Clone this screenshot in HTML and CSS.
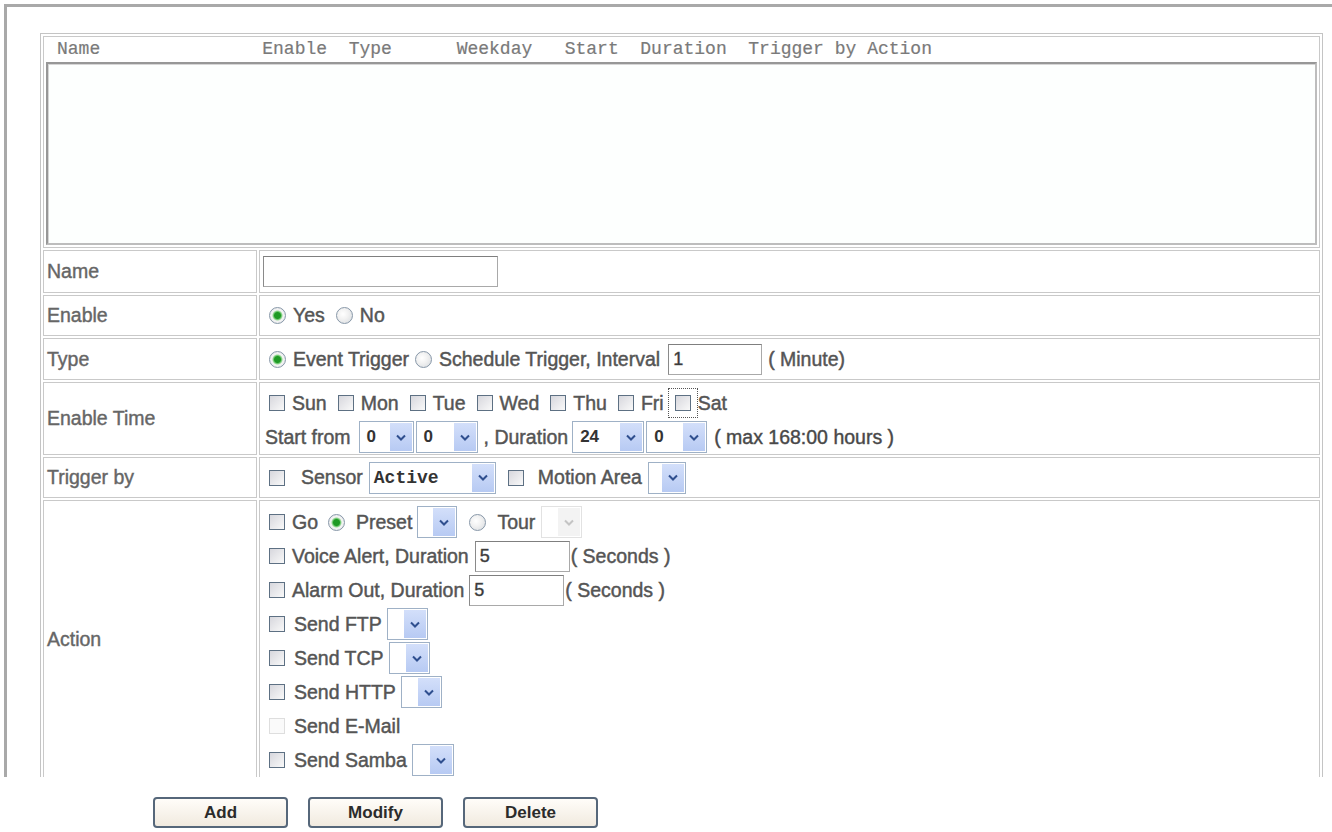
FILE: index.html
```html
<!DOCTYPE html>
<html lang="en">
<head>
    <meta charset="UTF-8">
    <title>Schedule</title>
    <link rel="stylesheet" href="styles.css">
</head>
<body>
    <div class="frame">
        <table class="sched">
            <tr>
                <td colspan="2" class="listcell">
                    <div class="listhead">Name               Enable  Type      Weekday   Start  Duration  Trigger by Action</div>
                    <div class="listbox"></div>
                </td>
            </tr>
            <tr>
                <td class="lbl">Name</td>
                <td class="val"><div class="ln h41"><input type="text" class="txt w-name"></div></td>
            </tr>
            <tr>
                <td class="lbl">Enable</td>
                <td class="val">
                    <div class="ln h39">
                        <input type="radio" class="rb" name="en" checked><span>Yes</span>
                        <input type="radio" class="rb ml11" name="en"><span>No</span>
                    </div>
                </td>
            </tr>
            <tr>
                <td class="lbl">Type</td>
                <td class="val">
                    <div class="ln h40">
                        <input type="radio" class="rb" name="tp" checked><span>Event Trigger</span>
                        <input type="radio" class="rb" name="tp"><span>Schedule Trigger, Interval</span>
                        <input type="text" class="txt w-int" value="1">
                        <span class="ml6">( Minute)</span>
                    </div>
                </td>
            </tr>
            <tr>
                <td class="lbl">Enable Time</td>
                <td class="val pt3">
                    <div class="ln">
                        <input type="checkbox" class="cb"><span>Sun</span>
                        <input type="checkbox" class="cb ml11"><span>Mon</span>
                        <input type="checkbox" class="cb ml11"><span>Tue</span>
                        <input type="checkbox" class="cb ml11"><span>Wed</span>
                        <input type="checkbox" class="cb ml11"><span>Thu</span>
                        <input type="checkbox" class="cb ml11"><span>Fri</span>
                        <input type="checkbox" class="cb ml11 focus"><span>Sat</span>
                    </div>
                    <div class="ln">
                        <span class="ml2">Start from</span>
                        <span class="sel ml8 w55"><span class="v">0</span><span class="arr"><svg width="10" height="7" viewBox="0 0 10 7"><path d="M1 1.5 5 5.5 9 1.5" fill="none" stroke="#2f4f8f" stroke-width="2"/></svg></span></span>
                        <span class="sel ml2 w62"><span class="v">0</span><span class="arr"><svg width="10" height="7" viewBox="0 0 10 7"><path d="M1 1.5 5 5.5 9 1.5" fill="none" stroke="#2f4f8f" stroke-width="2"/></svg></span></span>
                        <span class="ml6">, Duration</span>
                        <span class="sel ml4 w72"><span class="v">24</span><span class="arr"><svg width="10" height="7" viewBox="0 0 10 7"><path d="M1 1.5 5 5.5 9 1.5" fill="none" stroke="#2f4f8f" stroke-width="2"/></svg></span></span>
                        <span class="sel ml2 w61"><span class="v">0</span><span class="arr"><svg width="10" height="7" viewBox="0 0 10 7"><path d="M1 1.5 5 5.5 9 1.5" fill="none" stroke="#2f4f8f" stroke-width="2"/></svg></span></span>
                        <span class="ml7 dark">( max 168:00 hours )</span>
                    </div>
                </td>
            </tr>
            <tr>
                <td class="lbl">Trigger by</td>
                <td class="val">
                    <div class="ln h39">
                        <input type="checkbox" class="cb"><span class="ml9">Sensor</span>
                        <span class="sel ml6 w127"><span class="v mono">Active</span><span class="arr"><svg width="10" height="7" viewBox="0 0 10 7"><path d="M1 1.5 5 5.5 9 1.5" fill="none" stroke="#2f4f8f" stroke-width="2"/></svg></span></span>
                        <input type="checkbox" class="cb ml12"><span class="ml7">Motion Area</span>
                        <span class="sel ml6 w38"><span class="v"></span><span class="arr"><svg width="10" height="7" viewBox="0 0 10 7"><path d="M1 1.5 5 5.5 9 1.5" fill="none" stroke="#2f4f8f" stroke-width="2"/></svg></span></span>
                    </div>
                </td>
            </tr>
            <tr>
                <td class="lbl">Action</td>
                <td class="val pt4">
                    <div class="ln">
                        <input type="checkbox" class="cb"><span>Go</span>
                        <input type="radio" class="rb ml10" name="go" checked><span class="ml4">Preset</span>
                        <span class="sel ml5 w40"><span class="v"></span><span class="arr"><svg width="10" height="7" viewBox="0 0 10 7"><path d="M1 1.5 5 5.5 9 1.5" fill="none" stroke="#2f4f8f" stroke-width="2"/></svg></span></span>
                        <input type="radio" class="rb ml12" name="go"><span class="ml4">Tour</span>
                        <span class="sel off ml6 w41"><span class="v"></span><span class="arr"><svg width="10" height="7" viewBox="0 0 10 7"><path d="M1 1.5 5 5.5 9 1.5" fill="none" stroke="#c4c4c4" stroke-width="2"/></svg></span></span>
                    </div>
                    <div class="ln">
                        <input type="checkbox" class="cb"><span>Voice Alert, Duration</span>
                        <input type="text" class="txt w95 ml6" value="5"><span class="ml1">( Seconds )</span>
                    </div>
                    <div class="ln">
                        <input type="checkbox" class="cb"><span>Alarm Out, Duration</span>
                        <input type="text" class="txt w95 ml5" value="5"><span class="ml1">( Seconds )</span>
                    </div>
                    <div class="ln">
                        <input type="checkbox" class="cb"><span class="ml2">Send FTP</span>
                        <span class="sel ml5 w41"><span class="v"></span><span class="arr"><svg width="10" height="7" viewBox="0 0 10 7"><path d="M1 1.5 5 5.5 9 1.5" fill="none" stroke="#2f4f8f" stroke-width="2"/></svg></span></span>
                    </div>
                    <div class="ln">
                        <input type="checkbox" class="cb"><span class="ml2">Send TCP</span>
                        <span class="sel ml5 w41"><span class="v"></span><span class="arr"><svg width="10" height="7" viewBox="0 0 10 7"><path d="M1 1.5 5 5.5 9 1.5" fill="none" stroke="#2f4f8f" stroke-width="2"/></svg></span></span>
                    </div>
                    <div class="ln">
                        <input type="checkbox" class="cb"><span class="ml2">Send HTTP</span>
                        <span class="sel ml5 w41"><span class="v"></span><span class="arr"><svg width="10" height="7" viewBox="0 0 10 7"><path d="M1 1.5 5 5.5 9 1.5" fill="none" stroke="#2f4f8f" stroke-width="2"/></svg></span></span>
                    </div>
                    <div class="ln">
                        <input type="checkbox" class="cb" disabled><span class="ml2">Send E-Mail</span>
                    </div>
                    <div class="ln">
                        <input type="checkbox" class="cb"><span class="ml2">Send Samba</span>
                        <span class="sel ml5 w42"><span class="v"></span><span class="arr"><svg width="10" height="7" viewBox="0 0 10 7"><path d="M1 1.5 5 5.5 9 1.5" fill="none" stroke="#2f4f8f" stroke-width="2"/></svg></span></span>
                    </div>
                </td>
            </tr>
        </table>
    </div>

    <div class="btns">
        <button class="btn">Add</button>
        <button class="btn">Modify</button>
        <button class="btn">Delete</button>
    </div>
</body>
</html>
```

FILE: styles.css
```css
* { box-sizing: border-box; }
body { margin: 0; font-family: "Liberation Sans", Arial, sans-serif; font-size: 19.5px; color: #555; background: #fff; }

.frame { margin: 4px 0 0 4px; height: 773px; padding: 26px 0 0 33px; border-top: 3px solid #a9a9a9; border-left: 3px solid #a9a9a9; overflow: hidden; }

.sched { width: 1283px; border-collapse: separate; border-spacing: 2px; border: 1px solid #c4c4c4; }
.sched td { border: 1px solid #c9c9c9; padding: 0; }
.sched td.lbl { width: 214px; padding-left: 3px; color: #666; -webkit-text-stroke: 0.4px #666; }
.sched td.val { padding-left: 3px; -webkit-text-stroke: 0.45px #555; }
.pt3 { padding-top: 3px !important; }
.pt4 { padding-top: 4px !important; }
.dark { color: #444; }

.listcell { padding: 0 2px 2px 1px !important; }
.listhead { height: 25px; line-height: 25px; padding-left: 12px; white-space: pre; font-family: "Liberation Mono", "Courier New", monospace; font-size: 18px; color: #7a7a7a; -webkit-text-stroke: 0.2px #7a7a7a; }
.listbox { height: 183px; margin-left: 1px; border: 2px solid #bdbdbd; border-top-color: #979797; border-left-color: #979797; box-shadow: inset 1px 1px 0 #d6d6d6; background: #fdfffe; }

.ln { display: flex; align-items: center; height: 34px; white-space: nowrap; }
.h39 { height: 39px; }
.h40 { height: 40px; }
.h41 { height: 41px; }

.rb, .cb { -webkit-appearance: none; appearance: none; flex: none; margin: 0 7px 0 6px; }
.rb { width: 17px; height: 17px; border-radius: 50%; border: 1px solid #8797a8; background: radial-gradient(circle at 40% 40%, #fff 0, #f2f2f2 40%, #d6dade 100%); }
.rb:checked { background: radial-gradient(circle, #1f9a25 0 3px, #7fd07f 4.2px, #f4f4f4 5.5px, #dfe2e5 100%); }
.cb { width: 16px; height: 16px; border: 1px solid #5d7083; border-radius: 0; background: linear-gradient(135deg, #d7d7dd, #f9f9f9); }
.cb:disabled { border-color: #dedede; background: #fafafa; }
.cb.focus { outline: 1px dotted #555; outline-offset: 6px; }

.txt { height: 31px; padding: 0 4px; border: 1px solid #a9a9a9; border-top-color: #7f7f7f; border-left-color: #8a8a8a; font-family: "Liberation Sans", Arial, sans-serif; font-size: 18px; color: #333; outline: none; }
.w-name { width: 235px; }
.w-int { width: 94px; margin-left: 8px; }
.w95 { width: 95px; }

.sel { display: inline-flex; flex: none; height: 32px; border: 1px solid #9fb1c6; background: #fff; -webkit-text-stroke: 0; }
.sel .v { flex: 1; padding-left: 7px; line-height: 30px; font-size: 17px; font-weight: bold; color: #333; }
.sel .v.mono { font-family: "Liberation Mono", "Courier New", monospace; font-size: 18px; padding-left: 4px; }
.sel .arr { width: 22px; display: flex; align-items: center; justify-content: center; margin: 1px; background: linear-gradient(#d3dffa, #b7caf3); }
.sel.off { border-color: #e2e2e2; }
.sel.off .arr { background: #f3f3f3; }
.w38 { width: 38px; }
.w40 { width: 40px; }
.w41 { width: 41px; }
.w42 { width: 42px; }
.w55 { width: 55px; }
.w61 { width: 61px; }
.w62 { width: 62px; }
.w72 { width: 72px; }
.w127 { width: 127px; }

.ml1 { margin-left: 1px; }
.ml2 { margin-left: 2px; }
.ml4 { margin-left: 4px; }
.ml5 { margin-left: 5px; }
.ml6 { margin-left: 6px; }
.ml7 { margin-left: 7px; }
.ml8 { margin-left: 8px; }
.ml9 { margin-left: 9px; }
.ml10 { margin-left: 10px; }
.ml11 { margin-left: 11px; }
.ml12 { margin-left: 12px; }

.btns { display: flex; gap: 20px; margin: 20px 0 0 153px; }
.btn { width: 135px; height: 31px; border: 2px solid #56677a; border-radius: 4px; background: linear-gradient(#fffdf9, #f1eadf); font-family: "Liberation Sans", Arial, sans-serif; font-size: 17px; font-weight: bold; color: #2b2b2b; }
```
